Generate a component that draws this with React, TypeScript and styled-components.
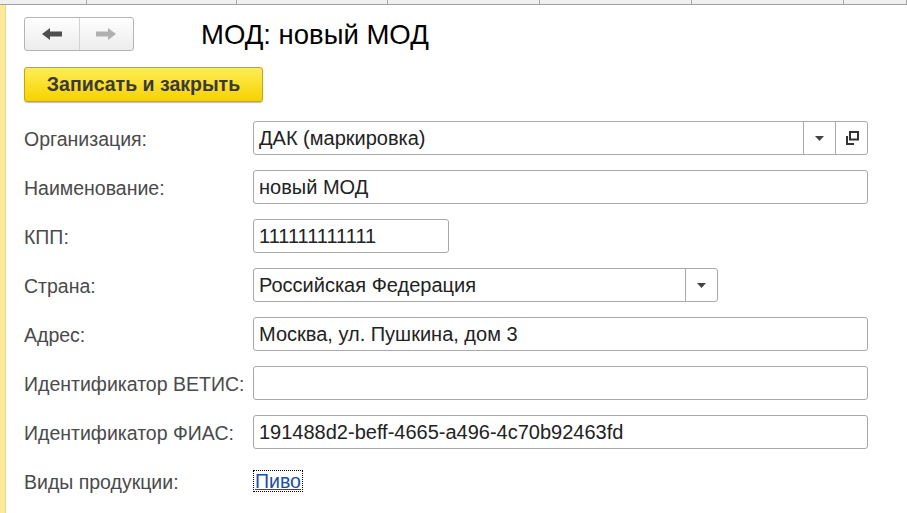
import * as React from 'react';
import styled, { createGlobalStyle } from 'styled-components';

const GlobalStyle = createGlobalStyle`
    html, body {
        margin: 0;
        padding: 0;
        background: #fff;
        font-family: "Liberation Sans", Arial, sans-serif;
    }
`;

const Page = styled.div`
    width: 907px;
    height: 513px;
    display: flex;
    flex-direction: column;
    overflow: hidden;
`;

const TabStrip = styled.div`
    height: 4px;
    background: #f0f0f0;
    border-bottom: 1px solid #a0a0a0;
    display: flex;
`;

const Tab = styled.div<{ $w: number }>`
    width: ${(p) => p.$w}px;
    flex-shrink: 0;
    border-right: 1px solid #a8a8a8;
    box-sizing: border-box;
`;

const Body = styled.div`
    flex: 1;
    display: flex;
`;

const SideStrip = styled.div`
    width: 5px;
    background: #fce99c;
    border-right: 1px solid #ecd88a;
`;

const Content = styled.div`
    flex: 1;
    padding: 12px 0 0 18px;
    display: flex;
    flex-direction: column;
`;

const Header = styled.div`
    display: flex;
    align-items: center;
    height: 34px;
`;

const NavGroup = styled.div`
    display: flex;
    width: 110px;
    height: 34px;
    box-sizing: border-box;
    border: 1px solid #b4b4b4;
    border-radius: 3px;
    background: linear-gradient(#ffffff, #ececec);
`;

const NavButton = styled.div<{ $first?: boolean }>`
    flex: 1;
    display: flex;
    align-items: center;
    justify-content: center;
    border-right: ${(p) => (p.$first ? '1px solid #d2d2d2' : 'none')};
`;

const Title = styled.h1`
    margin: 0 0 0 67px;
    font-size: 27.5px;
    font-weight: normal;
    color: #000;
    line-height: 34px;
    padding-top: 2px;
`;

const SaveButton = styled.div`
    margin-top: 16px;
    width: 239px;
    height: 35px;
    box-sizing: border-box;
    border: 1px solid #c4a800;
    border-radius: 3px;
    background: linear-gradient(#ffed55, #f6d200);
    box-shadow: 0 1px 1px rgba(0, 0, 0, 0.25);
    display: flex;
    align-items: center;
    justify-content: center;
    font-size: 19.5px;
    font-weight: bold;
    color: #3a3a3a;
`;

const Form = styled.div`
    margin-top: 19px;
    display: grid;
    grid-template-columns: 229px 1fr;
    grid-auto-rows: 34px;
    row-gap: 15px;
    align-items: center;
`;

const Label = styled.div`
    font-size: 19.5px;
    color: #4a4a4a;
    line-height: 34px;
    transform: translateY(1px);
`;

const Field = styled.div<{ $w: number }>`
    width: ${(p) => p.$w}px;
    height: 34px;
    box-sizing: border-box;
    border: 1px solid #a9a9a9;
    border-radius: 3px;
    display: flex;
    align-items: stretch;
    background: #fff;
`;

const Value = styled.div`
    flex: 1;
    padding-left: 5px;
    font-size: 20px;
    color: #222;
    line-height: 32px;
    white-space: nowrap;
    overflow: hidden;
`;

const FieldButton = styled.div`
    width: 31px;
    border-left: 1px solid #a9a9a9;
    display: flex;
    align-items: center;
    justify-content: center;
`;

const Link = styled.a`
    justify-self: start;
    margin-left: 1px;
    padding: 0 1px;
    font-size: 19.5px;
    line-height: 20px;
    color: #1a4da8;
    text-decoration: underline;
    outline: 1px dotted #000;
`;

const ArrowLeft = () => (
    <svg width="22" height="14" viewBox="0 0 22 14">
        <path d="M1 7 L9 1 V4.5 H21 V9.5 H9 V13 Z" fill="#4f4f4f" />
    </svg>
);

const ArrowRight = () => (
    <svg width="22" height="14" viewBox="0 0 22 14">
        <path d="M21 7 L13 1 V4.5 H1 V9.5 H13 V13 Z" fill="#b0b0b0" />
    </svg>
);

const DropArrow = () => (
    <svg width="9" height="5" viewBox="0 0 9 5">
        <path d="M0 0 H9 L4.5 5 Z" fill="#444" />
    </svg>
);

const OpenIcon = () => (
    <svg width="16" height="16" viewBox="0 0 16 16">
        <rect x="6" y="2" width="8" height="7.5" fill="none" stroke="#333" strokeWidth="2" />
        <path d="M3 6 V14 H10" fill="none" stroke="#333" strokeWidth="2" />
    </svg>
);

type Row = {
    label: string;
    value: string;
    width: number;
    drop?: boolean;
    open?: boolean;
};

const rows: Row[] = [
    { label: 'Организация:', value: 'ДАК (маркировка)', width: 615, drop: true, open: true },
    { label: 'Наименование:', value: 'новый МОД', width: 615 },
    { label: 'КПП:', value: '111111111111', width: 196 },
    { label: 'Страна:', value: 'Российская Федерация', width: 465, drop: true },
    { label: 'Адрес:', value: 'Москва, ул. Пушкина, дом 3', width: 615 },
    { label: 'Идентификатор ВЕТИС:', value: '', width: 615 },
    { label: 'Идентификатор ФИАС:', value: '191488d2-beff-4665-a496-4c70b92463fd', width: 615 },
];

const tabs = [87, 150, 151, 152, 152, 152, 63];

export default function App() {
    return (
        <Page>
            <GlobalStyle />
            <TabStrip>
                {tabs.map((w, i) => (
                    <Tab key={i} $w={w} />
                ))}
            </TabStrip>
            <Body>
                <SideStrip />
                <Content>
                    <Header>
                        <NavGroup>
                            <NavButton $first>
                                <ArrowLeft />
                            </NavButton>
                            <NavButton>
                                <ArrowRight />
                            </NavButton>
                        </NavGroup>
                        <Title>МОД: новый МОД</Title>
                    </Header>
                    <SaveButton>Записать и закрыть</SaveButton>
                    <Form>
                        {rows.map((r) => (
                            <React.Fragment key={r.label}>
                                <Label>{r.label}</Label>
                                <Field $w={r.width}>
                                    <Value>{r.value}</Value>
                                    {r.drop && (
                                        <FieldButton>
                                            <DropArrow />
                                        </FieldButton>
                                    )}
                                    {r.open && (
                                        <FieldButton>
                                            <OpenIcon />
                                        </FieldButton>
                                    )}
                                </Field>
                            </React.Fragment>
                        ))}
                        <Label>Виды продукции:</Label>
                        <Link href="#">Пиво</Link>
                    </Form>
                </Content>
            </Body>
        </Page>
    );
}
